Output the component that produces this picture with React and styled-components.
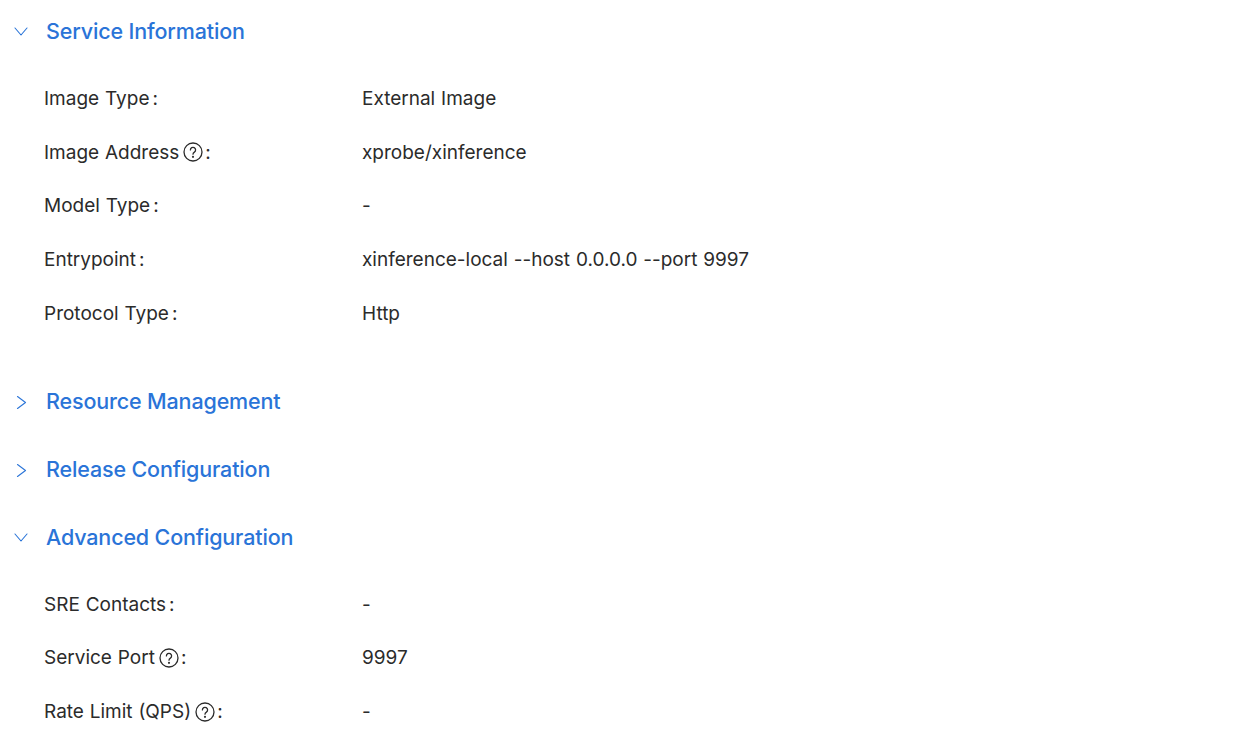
import { createGlobalStyle } from "styled-components";
import styled from "styled-components";

const GlobalStyle = createGlobalStyle`
    html, body {
        margin: 0;
        padding: 0;
        background: #fff;
        overflow: hidden;
    }
    body {
        font-family: Inter, "Liberation Sans", sans-serif;
    }
`;

const Page = styled.div`
    height: 740px;
    display: flex;
    flex-direction: column;
    gap: 6px;
    overflow: hidden;
`;

const SectionHeader = styled.div`
    height: 62px;
    display: flex;
    align-items: center;
    padding-left: 13px;
    color: #2a74d8;
`;

const ArrowBox = styled.span`
    width: 33px;
    display: flex;
    align-items: center;
    flex-shrink: 0;
`;

const SectionTitle = styled.h2`
    margin: 0;
    font-size: 21.5px;
    font-weight: 500;
    letter-spacing: -0.15px;
`;

const SectionBody = styled.div`
    padding: 9.5px 0 23.5px;
`;

const Row = styled.div`
    height: 53.75px;
    display: grid;
    grid-template-columns: 362px 1fr;
    align-items: center;
    font-size: 19px;
    word-spacing: 0.5px;
    color: #2b2b2b;
`;

const Label = styled.div`
    padding-left: 44px;
    display: flex;
    align-items: center;
`;

const Colon = styled.span`
    margin-left: ${(p) => (p.$afterIcon ? "2px" : "3px")};
`;

const HelpIcon = styled.svg`
    width: 20px;
    height: 20px;
    margin-left: 4px;
    flex-shrink: 0;
`;

const Help = () => (
    <HelpIcon viewBox="0 0 20 20" fill="none" stroke="#2b2b2b" strokeWidth="1.3" strokeLinecap="round">
        <circle cx="10" cy="10" r="9" />
        <path d="M7.4 7.9a2.6 2.6 0 1 1 4 2.2c-.9.6-1.4 1-1.4 2.1" />
        <circle cx="10" cy="14.8" r=".45" fill="#2b2b2b" />
    </HelpIcon>
);

const Arrow = ({ open }) => (
    <svg width="16" height="16" viewBox="0 0 16 16" fill="none" stroke="#2a74d8" strokeWidth="1.1" strokeLinecap="round" strokeLinejoin="round">
        {open ? <path d="M2 5l6 7 6-7" /> : <path d="M4.5 3.5l8 6-8 6" />}
    </svg>
);

const sections = [
    {
        title: "Service Information",
        open: true,
        rows: [
            { label: "Image Type", value: "External Image" },
            { label: "Image Address", value: "xprobe/xinference", help: true },
            { label: "Model Type", value: "-" },
            { label: "Entrypoint", value: "xinference-local --host 0.0.0.0 --port 9997" },
            { label: "Protocol Type", value: "Http" },
        ],
    },
    { title: "Resource Management" },
    { title: "Release Configuration" },
    {
        title: "Advanced Configuration",
        open: true,
        rows: [
            { label: "SRE Contacts", value: "-" },
            { label: "Service Port", value: "9997", help: true },
            { label: "Rate Limit (QPS)", value: "-", help: true },
        ],
    },
];

export default function App() {
    return (
        <Page>
            <GlobalStyle />
            {sections.map((section) => (
                <section key={section.title}>
                    <SectionHeader>
                        <ArrowBox>
                            <Arrow open={section.open} />
                        </ArrowBox>
                        <SectionTitle>{section.title}</SectionTitle>
                    </SectionHeader>
                    {section.open && (
                        <SectionBody>
                            {section.rows.map((row) => (
                                <Row key={row.label}>
                                    <Label>
                                        {row.label}
                                        {row.help && <Help />}
                                        <Colon $afterIcon={row.help}>:</Colon>
                                    </Label>
                                    <div>{row.value}</div>
                                </Row>
                            ))}
                        </SectionBody>
                    )}
                </section>
            ))}
        </Page>
    );
}
